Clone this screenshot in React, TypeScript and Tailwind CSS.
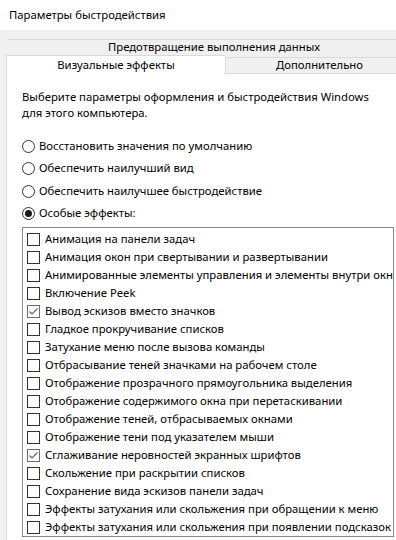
import { useState } from "react"

const effects: [string, boolean][] = [
  ["Анимация на панели задач", false],
  ["Анимация окон при свертывании и развертывании", false],
  ["Анимированные элементы управления и элементы внутри окна", false],
  ["Включение Peek", false],
  ["Вывод эскизов вместо значков", true],
  ["Гладкое прокручивание списков", false],
  ["Затухание меню после вызова команды", false],
  ["Отбрасывание теней значками на рабочем столе", false],
  ["Отображение прозрачного прямоугольника выделения", false],
  ["Отображение содержимого окна при перетаскивании", false],
  ["Отображение теней, отбрасываемых окнами", false],
  ["Отображение тени под указателем мыши", false],
  ["Сглаживание неровностей экранных шрифтов", true],
  ["Скольжение при раскрытии списков", false],
  ["Сохранение вида эскизов панели задач", false],
  ["Эффекты затухания или скольжения при обращении к меню", false],
  ["Эффекты затухания или скольжения при появлении подсказок", false],
]

const modes = [
  "Восстановить значения по умолчанию",
  "Обеспечить наилучший вид",
  "Обеспечить наилучшее быстродействие",
  "Особые эффекты:",
]

function Radio({ checked }: { checked: boolean }) {
  return (
    <span className="w-[13px] h-[13px] rounded-full border border-[#333] bg-white flex items-center justify-center shrink-0">
      {checked && <span className="w-[7px] h-[7px] rounded-full bg-[#1a1a1a]" />}
    </span>
  )
}

function Check({ checked }: { checked: boolean }) {
  return (
    <span
      className={
        checked
          ? "w-[13px] h-[13px] border border-[#6b6b6b] bg-white flex items-center justify-center shrink-0"
          : "w-[13px] h-[13px] border border-[#333] bg-white shrink-0"
      }
    >
      {checked && (
        <svg width="11" height="11" viewBox="0 0 11 11">
          <polyline points="1.5,5.5 4,8 9.5,2.5" fill="none" stroke="#5f5f5f" strokeWidth="1.1" />
        </svg>
      )}
    </span>
  )
}

export default function App() {
  const [mode, setMode] = useState(3)
  const [items, setItems] = useState(effects)

  return (
    <div
      className="w-[396px] h-[540px] overflow-hidden bg-[#f0f0f0] text-[11.3px] text-black flex flex-col"
      style={{ fontFamily: '"Noto Sans", "Segoe UI", sans-serif' }}
    >
      <div className="h-[30px] bg-white flex items-center pl-[9px] shrink-0">Параметры быстродействия</div>

      {/* tab rows */}
      <div className="mt-[9px] ml-[8px] h-[16px] border-t border-[#dadada] flex items-center pl-[100px] whitespace-nowrap shrink-0">
        Предотвращение выполнения данных
      </div>
      <div className="flex h-[19px] shrink-0 overflow-hidden">
        <div className="ml-[6px] w-[219px] shrink-0 bg-white border-t border-l border-[#d9d9d9] flex items-center justify-center">
          Визуальные эффекты
        </div>
        <div className="mt-[2px] w-[190px] border-t border-l border-b border-[#d9d9d9] flex items-center justify-center pr-[2px] shrink-0">
          Дополнительно
        </div>
      </div>

      {/* panel */}
      <div className="flex-1 ml-[6px] bg-white border-l border-[#d9d9d9] pl-[15px] pt-[15px] min-h-0">
        <p className="leading-[16px] w-[360px]">
          Выберите параметры оформления и быстродействия Windows для этого компьютера.
        </p>

        <div className="mt-[14px] flex flex-col">
          {modes.map((m, i) => (
            <button
              key={m}
              onClick={() => setMode(i)}
              className="h-[22.5px] flex items-center gap-[4px] text-left"
            >
              <Radio checked={mode === i} />
              <span>{m}</span>
            </button>
          ))}
        </div>

        <div className="mt-[2px] border border-[#828790] w-[372px] pt-[2px] overflow-hidden">
          {items.map(([label, on], i) => (
            <button
              key={label}
              onClick={() =>
                setItems(prev => prev.map((it, j) => (j === i ? [it[0], !it[1]] : it)))
              }
              className="h-[18px] w-full flex items-center pl-[4px] gap-[5px] whitespace-nowrap text-left"
            >
              <Check checked={on} />
              <span>{label}</span>
            </button>
          ))}
        </div>
      </div>
    </div>
  )
}
